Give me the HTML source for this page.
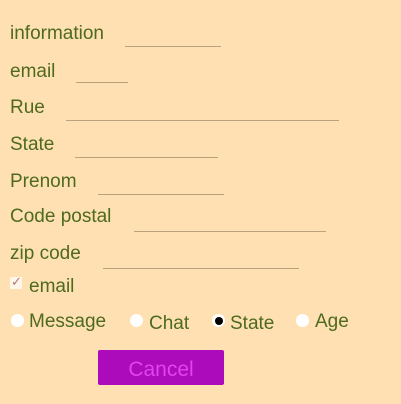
<!DOCTYPE html><html><head><style>
body{margin:0;width:401px;height:404px;background:#fee0b2;font-family:"Liberation Sans",sans-serif;color:#4e6a1e;position:relative;overflow:hidden}
.t{position:absolute;font-size:19px;line-height:20px;white-space:nowrap;margin-top:1px}
.l{position:absolute;height:1px;background:#b9a27c}
.r{position:absolute;width:13px;height:13px;border-radius:50%;background:#fff}
</style></head><body>
<div class="t" style="left:10px;top:23px">information</div><div class="l" style="left:125px;width:96px;top:46px"></div>
<div class="t" style="left:10px;top:61px">email</div><div class="l" style="left:76px;width:52px;top:82px"></div>
<div class="t" style="left:10px;top:97px">Rue</div><div class="l" style="left:66px;width:273px;top:120px"></div>
<div class="t" style="left:10px;top:134px">State</div><div class="l" style="left:75px;width:143px;top:157px"></div>
<div class="t" style="left:10px;top:171px">Prenom</div><div class="l" style="left:98px;width:126px;top:194px"></div>
<div class="t" style="left:10px;top:206px">Code postal</div><div class="l" style="left:134px;width:192px;top:231px"></div>
<div class="t" style="left:10px;top:243px">zip code</div><div class="l" style="left:103px;width:196px;top:268px"></div>
<div style="position:absolute;left:10px;top:277px;width:12px;height:12px;background:#fff5e8"></div>
<div style="position:absolute;left:11px;top:274px;color:#b07a7a;font-size:13px">✓</div>
<div class="t" style="left:29px;top:276px">email</div>
<div class="r" style="left:11px;top:314px"></div><div class="t" style="left:29px;top:311px">Message</div>
<div class="r" style="left:130px;top:314px"></div><div class="t" style="left:149px;top:313px">Chat</div>
<div class="r" style="left:212px;top:314px"></div><div style="position:absolute;left:215px;top:317px;width:8px;height:8px;border-radius:50%;background:#000"></div><div class="t" style="left:230px;top:313px">State</div>
<div class="r" style="left:296px;top:314px"></div><div class="t" style="left:315px;top:311px">Age</div>
<div style="position:absolute;left:98px;top:350px;width:126px;height:35px;background:#ab0bbb;border-radius:2px;color:#e044ee;font-size:21px;line-height:40px;text-align:center">Cancel</div>
</body></html>
